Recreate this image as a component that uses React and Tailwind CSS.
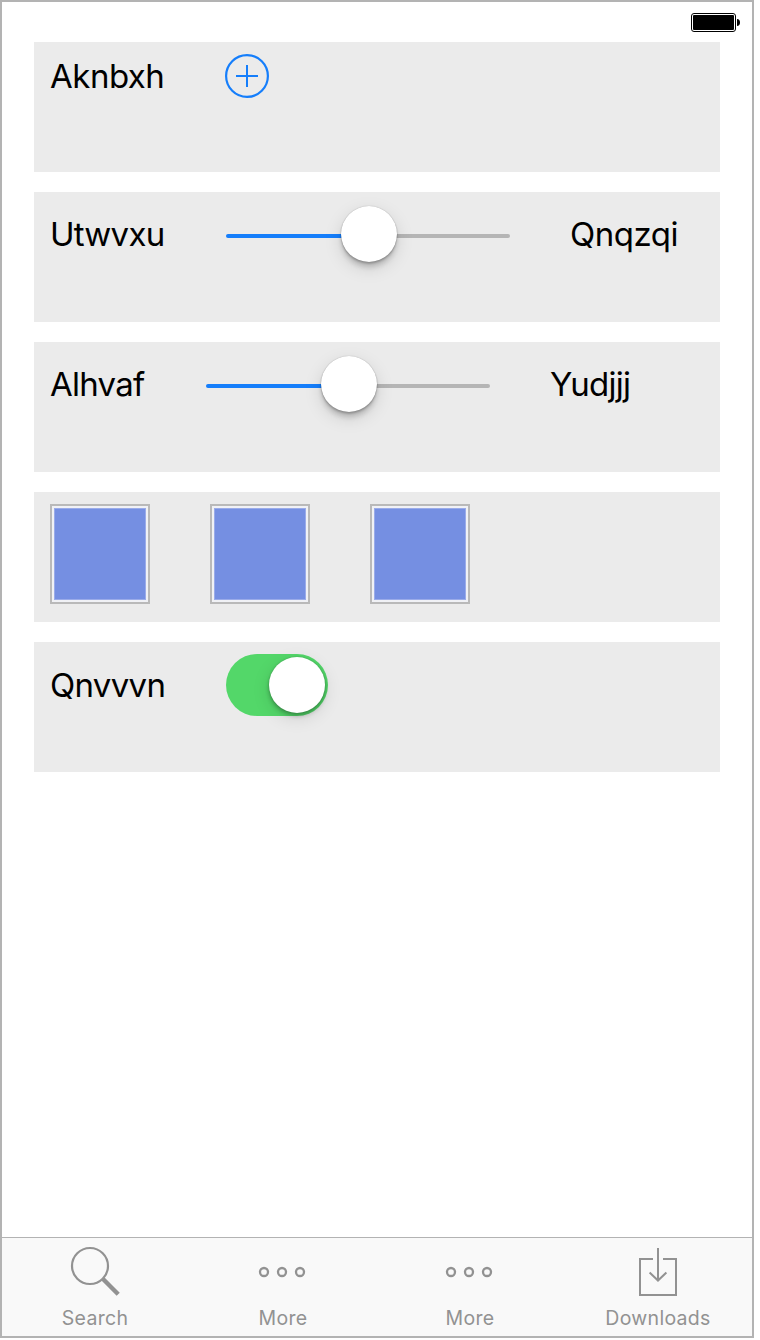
function Panel({ children }) {
  return <section className="flex h-[130px] w-[686px] items-start bg-[#ebebeb] pl-4 pt-3">{children}</section>;
}

function Label({ children, className }) {
  return <span className={`block shrink-0 whitespace-nowrap text-[33px] leading-[45px] text-black ${className}`}>{children}</span>;
}

function Slider() {
  return (
    <div className="relative flex h-16 w-[284px] shrink-0 items-start pt-[30px]">
      <div className="h-1 w-[142px] rounded-l-full bg-[#157efb]" />
      <div className="h-1 w-[142px] rounded-r-full bg-[#b5b5b5]" />
      <div className="absolute left-[115px] top-[2px] h-14 w-14 rounded-full bg-white shadow-[0_0_1px_rgba(0,0,0,0.35),0_6px_4px_rgba(0,0,0,0.13),0_2px_2px_rgba(0,0,0,0.2),0_6px_18px_rgba(0,0,0,0.13)]" />
    </div>
  );
}

function Swatch() {
  return (
    <div className="h-[100px] w-[100px] border-2 border-[#b9b9b9] bg-[#f0f1f5] p-[2px]">
      <div className="h-full w-full border border-[#9aabe9] bg-[#758fe2]" />
    </div>
  );
}

function AddButton() {
  return (
    <svg width="44" height="44" viewBox="0 0 44 44" fill="none" stroke="#157efb" strokeWidth="2">
      <circle cx="22" cy="22" r="20.9" strokeWidth="2.2" />
      <path d="M11 22H33M22 11V33" />
    </svg>
  );
}

function Battery() {
  return (
    <svg width="49" height="19" viewBox="0 0 49 19" fill="none">
      <rect x=".5" y=".5" width="44" height="18" rx="2.5" stroke="#000" />
      <rect x="2" y="2" width="41" height="15" rx="1" fill="#000" />
      <path d="M46 6C48 6 49 7.5 49 9.5S48 13 46 13Z" fill="#000" />
    </svg>
  );
}

function SearchIcon() {
  return (
    <svg width="50" height="50" viewBox="0 0 50 50" fill="none" stroke="#929292">
      <circle cx="20" cy="20" r="18" strokeWidth="2.2" />
      <path d="M33 33L48.2 48.2" strokeWidth="4.4" />
    </svg>
  );
}

function MoreIcon({ className = "" }) {
  return (
    <svg className={className} width="50" height="50" viewBox="0 0 50 50" fill="none" stroke="#929292" strokeWidth="2.3">
      <circle cx="7" cy="26" r="4" />
      <circle cx="25" cy="26" r="4" />
      <circle cx="43" cy="26" r="4" />
    </svg>
  );
}

function DownloadIcon() {
  return (
    <svg width="50" height="50" viewBox="0 0 50 50" fill="none" stroke="#929292" strokeWidth="2">
      <path d="M20 13H7V49H43V13H30M25 2V34M16.6 26.5L25 34.5L33.4 26.5" />
    </svg>
  );
}

function Tab({ icon, label, className, labelClassName = "" }) {
  return (
    <div className={`flex flex-col items-center pt-2 ${className}`}>
      {icon}
      <span className={`mt-[10px] text-[19.5px] leading-6 tracking-[0.3px] text-[#929292] ${labelClassName}`}>{label}</span>
    </div>
  );
}

export default function App() {
  return (
    <div className="h-[1340px] w-[760px] bg-white font-['Inter',sans-serif]">
      <div className="flex h-[1338px] w-[754px] flex-col border-2 border-[#b3b3b3] bg-white">
        <header className="flex h-10 shrink-0 justify-end pr-[12px] pt-[11px]">
          <Battery />
        </header>
        <main className="flex flex-1 flex-col gap-5 pl-8">
          <Panel>
            <Label className="w-[175px] tracking-[-0.5px]">Aknbxh</Label>
            <AddButton />
          </Panel>
          <Panel>
            <Label className="mt-2 w-[176px] tracking-[-0.75px]">Utwvxu</Label>
            <Slider />
            <Label className="ml-[60px] mt-2 tracking-[-0.5px]">Qnqzqi</Label>
          </Panel>
          <Panel>
            <Label className="mt-2 w-[156px] tracking-[-0.75px]">Alhvaf</Label>
            <Slider />
            <Label className="ml-[60px] mt-2 tracking-[-0.75px]">Yudjjj</Label>
          </Panel>
          <Panel>
            <div className="flex gap-[60px]">
              <Swatch />
              <Swatch />
              <Swatch />
            </div>
          </Panel>
          <Panel>
            <Label className="mt-[9px] w-[176px] tracking-[-0.7px]">Qnvvvn</Label>
            <div className="flex h-[62px] w-[102px] justify-end rounded-full bg-[#53d769] p-[3px]">
              <div className="h-14 w-14 rounded-full bg-white shadow-[0_0_2px_rgba(0,0,0,0.2),0_3px_4px_rgba(0,0,0,0.25),0_5px_18px_rgba(0,0,0,0.12)]" />
            </div>
          </Panel>
        </main>
        <nav className="flex h-[99px] shrink-0 border-t border-[#b3b3b3] bg-[#f9f9f9]">
          <Tab className="w-[186px]" icon={<SearchIcon />} label="Search" />
          <Tab className="w-[188px]" labelClassName="pl-[2px]" icon={<MoreIcon />} label="More" />
          <Tab className="w-[188px]" icon={<MoreIcon className="mr-[2px]" />} label="More" />
          <Tab className="w-[188px]" icon={<DownloadIcon />} label="Downloads" />
        </nav>
      </div>
    </div>
  );
}
